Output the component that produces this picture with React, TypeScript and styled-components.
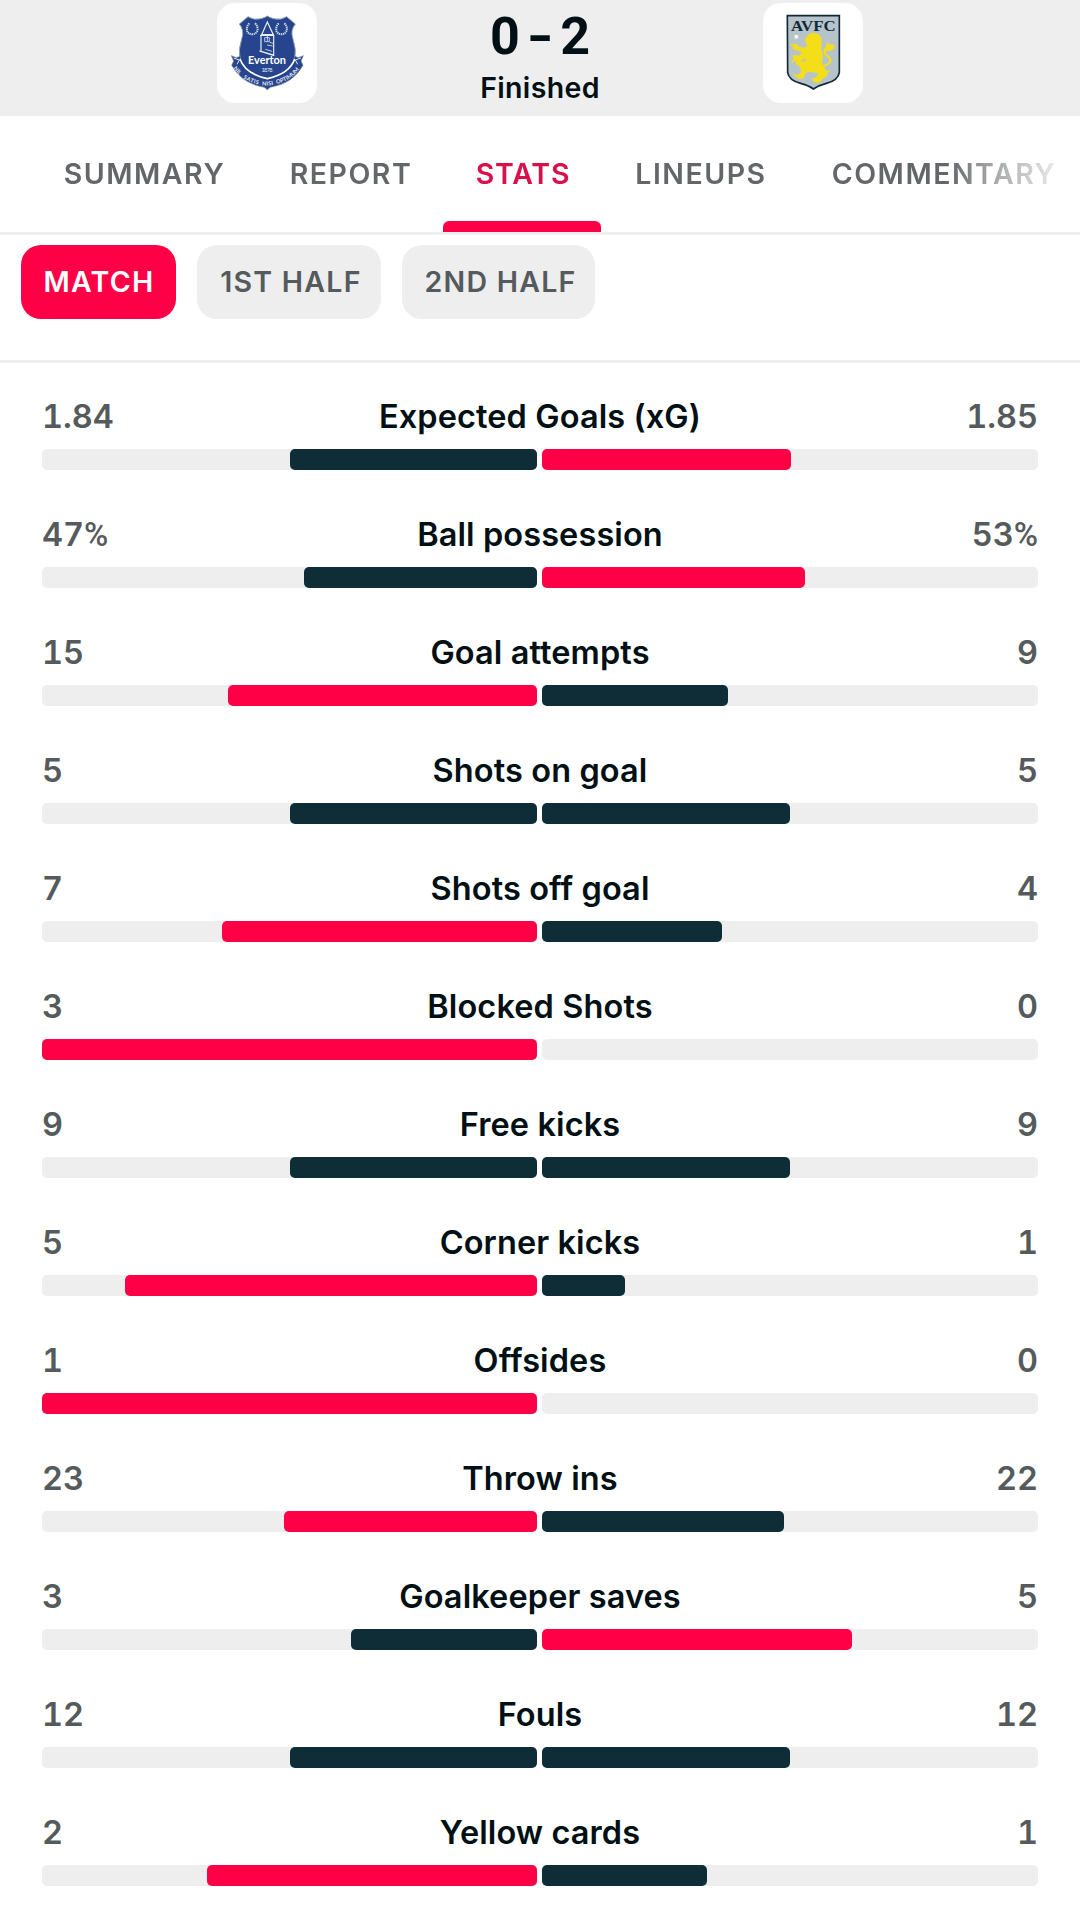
import React from "react";
import styled, { createGlobalStyle } from "styled-components";

const color = {
  accent: "#ff0046",
  accentText: "#d8104c",
  navy: "#0f2d37",
  ink: "#001014",
  grey: "#555a5c",
  tab: "#646769",
  surface: "#eeeeee",
};

const GlobalStyle = createGlobalStyle`
  * { box-sizing: border-box; }
  body {
    margin: 0;
    background: #fff;
    font-family: Inter, "Liberation Sans", sans-serif;
    color: ${color.ink};
  }
`;

const Page = styled.main`
  width: 1080px;
  height: 1917px;
  overflow: hidden;
  background: #fff;
`;

const Scoreboard = styled.header`
  display: grid;
  grid-template-columns: 100px 1fr 100px;
  height: 116px;
  padding: 3px 217px 0;
  background: ${color.surface};
`;

const BadgeCard = styled.div`
  width: 100px;
  height: 100px;
  border-radius: 18px;
  background: #fff;
  overflow: hidden;

  svg {
    display: block;
  }
`;

const ScoreColumn = styled.div`
  display: flex;
  flex-direction: column;
  align-items: center;
`;

const Score = styled.div`
  display: flex;
  justify-content: center;
  gap: 10px;
  height: 68px;
  font: 700 52px/68px Roboto, sans-serif;
`;

const Dash = styled.span`
  transform: scaleX(1.35);
`;

const Status = styled.div`
  font-size: 28.5px;
  line-height: 34px;
  font-weight: 560;
  letter-spacing: 0.35px;
`;

const Tabs = styled.nav`
  display: flex;
  height: 119px;
  padding-left: 30px;
  border-bottom: 3px solid ${color.surface};
`;

const TabStrip = styled.div`
  display: flex;
  flex: 1;
  min-width: 0;
  mask-image: linear-gradient(to right, #000 920px, rgba(0, 0, 0, 0.68) 950px, transparent 1046px);
`;

const Tab = styled.button<{ $active?: boolean; $width: number }>`
  display: flex;
  flex: none;
  justify-content: center;
  align-items: center;
  width: ${(p) => p.$width}px;
  height: 116px;
  padding: 0 0 1px 2px;
  border: 0;
  background: none;
  color: ${(p) => (p.$active ? color.accentText : color.tab)};
  font: 600 28.5px/34px Inter, sans-serif;
  letter-spacing: ${(p) => (p.$active ? 0.8 : 1.5)}px;
  position: relative;

  &::after {
    content: "";
    display: ${(p) => (p.$active ? "block" : "none")};
    position: absolute;
    left: 0;
    right: 0;
    bottom: 0;
    height: 11px;
    border-radius: 6px 6px 0 0;
    background: ${color.accent};
  }
`;

const Chips = styled.div`
  display: flex;
  gap: 21px;
  height: 128px;
  padding: 10px 21px 0;
  border-bottom: 3px solid ${color.surface};
`;

const Chip = styled.button<{ $active?: boolean; $width: number }>`
  width: ${(p) => p.$width}px;
  height: 74px;
  padding: 0 0 0 ${(p) => (p.$active ? 1 : 4)}px;
  border: 0;
  border-radius: 20px;
  background: ${(p) => (p.$active ? color.accent : color.surface)};
  color: ${(p) => (p.$active ? "#fff" : color.grey)};
  font: 600 28.5px/74px Inter, sans-serif;
  letter-spacing: 1.25px;
`;

const StatList = styled.section`
  display: flex;
  flex-direction: column;
  padding: 34px 42px 0;
`;

const StatRow = styled.div`
  flex: none;
  height: 118px;
`;

const StatHead = styled.div`
  display: grid;
  grid-template-columns: 160px 1fr 160px;
  height: 52px;
  line-height: 40px;
  font-size: 32.5px;
`;

const Value = styled.span<{ $end?: boolean }>`
  color: ${color.grey};
  font-weight: 600;
  font-variant-numeric: tabular-nums;
  text-align: ${(p) => (p.$end ? "right" : "left")};
`;

const Percent = styled.span`
  font-family: Roboto, sans-serif;
  font-weight: 500;
  font-size: 33px;
`;

const Label = styled.span`
  text-align: center;
  font-weight: 560;
  font-variant-ligatures: none;
  letter-spacing: 0.1px;
  white-space: nowrap;
`;

const Bars = styled.div`
  display: grid;
  grid-template-columns: 495px 496px;
  gap: 5px;
`;

const Track = styled.div<{ $home?: boolean }>`
  display: flex;
  justify-content: ${(p) => (p.$home ? "flex-end" : "flex-start")};
  height: 21px;
  border-radius: 5px;
  background: ${color.surface};
`;

const Fill = styled.div<{ $lead: boolean }>`
  border-radius: 5px;
  background: ${(p) => (p.$lead ? color.accent : color.navy)};
`;

type Stat = { label: string; home: number; away: number; percent?: boolean };

const stats: Stat[] = [
  { label: "Expected Goals (xG)", home: 1.84, away: 1.85 },
  { label: "Ball possession", home: 47, away: 53, percent: true },
  { label: "Goal attempts", home: 15, away: 9 },
  { label: "Shots on goal", home: 5, away: 5 },
  { label: "Shots off goal", home: 7, away: 4 },
  { label: "Blocked Shots", home: 3, away: 0 },
  { label: "Free kicks", home: 9, away: 9 },
  { label: "Corner kicks", home: 5, away: 1 },
  { label: "Offsides", home: 1, away: 0 },
  { label: "Throw ins", home: 23, away: 22 },
  { label: "Goalkeeper saves", home: 3, away: 5 },
  { label: "Fouls", home: 12, away: 12 },
  { label: "Yellow cards", home: 2, away: 1 },
];

const motto = [
  { word: "NIL", path: "M49 196 Q58 209 72 221", length: 27 },
  { word: "SATIS", path: "M78 226 Q98 239 130 246", length: 50 },
  { word: "NISI", path: "M135 247 Q152 249 173 244", length: 35 },
  { word: "OPTIMUM", path: "M179 243 Q228 230 254 190", length: 82 },
];

function EvertonBadge() {
  return (
    <svg width="100" height="100" viewBox="0 0 300 300">
      <path
        d="M93 41 Q111 53 132 47 Q144 44 151 39 Q158 44 170 47 Q191 53 209 41 L235 63 Q219 83 228 108 Q239 139 233 170 Q222 210 151 233 Q80 210 69 170 Q63 139 74 108 Q83 83 67 63 Z"
        fill="#27458f"
        stroke="#8da2ad"
        strokeWidth="3"
      />
      <path
        d="M43 158 L58 164 L69 160 L72 177 Q92 215 151 228 Q210 215 230 177 L233 160 L244 164 L259 158 L252 174 L258 187 Q228 242 160 253 L151 260 L142 253 Q74 242 44 187 L50 174 Z"
        fill="#27458f"
        stroke="#71869a"
        strokeWidth="2"
      />
      <path d="M69 168 Q84 212 151 227 Q218 212 233 168" fill="none" stroke="#fff" strokeWidth="5" />
      <path d="M50 165 L67 171 L60 184 M252 165 L235 171 L242 184" fill="none" stroke="#dce5ee" strokeWidth="3" />
      <g fill="none" stroke="#cddbe4" strokeWidth="6" strokeDasharray="4 2">
        <path d="M97 61 C85 73 87 93 105 94 C124 93 127 73 114 61" />
        <path d="M185 61 C173 73 175 93 193 94 C211 93 215 73 202 61" />
      </g>
      <g fill="none" stroke="#e9eff2" strokeWidth="3.5">
        <path d="M151 57 L134 95 H169 Z M129 97 H172 M132 99 V145 L170 156 V99 M127 144 L172 158" />
        <path d="M151 95 V115 M143 104 H157 V116 H143 Z M150 126 L167 129 M145 139 L165 145 M158 118 L168 121" strokeWidth="2.3" />
      </g>
      <text x="150" y="183" textAnchor="middle" fill="#fff" fontFamily="Lato, sans-serif" fontWeight="700" fontSize="31" textLength="114" lengthAdjust="spacingAndGlyphs">
        Everton
      </text>
      <text x="150" y="208" textAnchor="middle" fill="#dfe8ed" fontFamily="Lato, sans-serif" fontSize="17" textLength="33">
        1878
      </text>
      {motto.map(({ word, path, length }) => (
        <g key={word}>
          <path id={`motto-${word}`} d={path} fill="none" />
          <text fill="#e1e9ee" fontFamily="Lato, sans-serif" fontWeight="700" fontSize="17">
            <textPath href={`#motto-${word}`} textLength={length}>
              {word}
            </textPath>
          </text>
        </g>
      ))}
    </svg>
  );
}

function VillaBadge() {
  return (
    <svg width="100" height="100" viewBox="0 0 300 300">
      <path
        d="M73 38 H229 V208 Q226 232 188 242 Q165 248 151 258 Q138 248 115 242 Q77 232 74 208 Z"
        fill="#b7c3cb"
        stroke="#102a35"
        strokeWidth="5"
      />
      <text x="151" y="85" textAnchor="middle" fill="#102a35" fontFamily="Liberation Serif, serif" fontWeight="700" fontSize="46" textLength="134" lengthAdjust="spacingAndGlyphs">
        AVFC
      </text>
      <circle cx="100" cy="101" r="6" fill="#fff" />
      <g fill="#f4de19">
        <path d="M134 97 Q143 87 157 90 Q174 94 176 110 Q177 127 174 138 Q184 153 178 172 Q174 188 187 198 L195 211 Q193 223 180 226 L172 238 Q158 242 150 235 L146 226 L160 223 L166 211 L144 207 Q135 204 128 211 L121 226 L108 229 L97 219 L105 214 L112 213 L114 200 L107 187 L97 184 L101 174 L114 174 L126 176 L130 165 L119 170 L105 178 L92 172 L88 158 L98 156 L107 158 L118 147 L105 143 L89 138 L90 124 L100 122 L108 131 L125 134 L133 128 L127 118 L126 109 Z" />
        <path d="M180 140 L188 133 L193 116 L201 125 L215 125 L213 137 L203 143 L189 145 Z" />
      </g>
      <path
        d="M175 190 Q193 187 201 178 Q205 168 194 160 Q181 150 187 138"
        fill="none"
        stroke="#f4de19"
        strokeWidth="6"
      />
      <path d="M94 171 L87 179 M99 219 L92 213 M194 207 L198 202 M89 129 L84 124" stroke="#f4de19" strokeWidth="5" />
    </svg>
  );
}

function StatItem({ stat: { label, home, away, percent } }: { stat: Stat }) {
  const total = home + away;
  const unit = percent ? <Percent>%</Percent> : null;
  return (
    <StatRow>
      <StatHead>
        <Value>
          {home}
          {unit}
        </Value>
        <Label>{label}</Label>
        <Value $end>
          {away}
          {unit}
        </Value>
      </StatHead>
      <Bars>
        <Track $home>
          <Fill $lead={home > away} style={{ width: `${(home / total) * 100}%` }} />
        </Track>
        <Track>
          <Fill $lead={away > home} style={{ width: `${(away / total) * 100}%` }} />
        </Track>
      </Bars>
    </StatRow>
  );
}

export default function App() {
  return (
    <Page>
      <GlobalStyle />
      <Scoreboard>
        <BadgeCard>
          <EvertonBadge />
        </BadgeCard>
        <ScoreColumn>
          <Score>
            <span>0</span>
            <Dash>-</Dash>
            <span>2</span>
          </Score>
          <Status>Finished</Status>
        </ScoreColumn>
        <BadgeCard>
          <VillaBadge />
        </BadgeCard>
      </Scoreboard>
      <Tabs>
        <TabStrip>
          <Tab $width={227}>SUMMARY</Tab>
          <Tab $width={186}>REPORT</Tab>
          <Tab $width={158} $active>
            STATS
          </Tab>
          <Tab $width={198}>LINEUPS</Tab>
          <Tab $width={288}>COMMENTARY</Tab>
        </TabStrip>
      </Tabs>
      <Chips>
        <Chip $width={155} $active>
          MATCH
        </Chip>
        <Chip $width={184}>1ST HALF</Chip>
        <Chip $width={193}>2ND HALF</Chip>
      </Chips>
      <StatList>
        {stats.map((stat) => (
          <StatItem key={stat.label} stat={stat} />
        ))}
      </StatList>
    </Page>
  );
}
